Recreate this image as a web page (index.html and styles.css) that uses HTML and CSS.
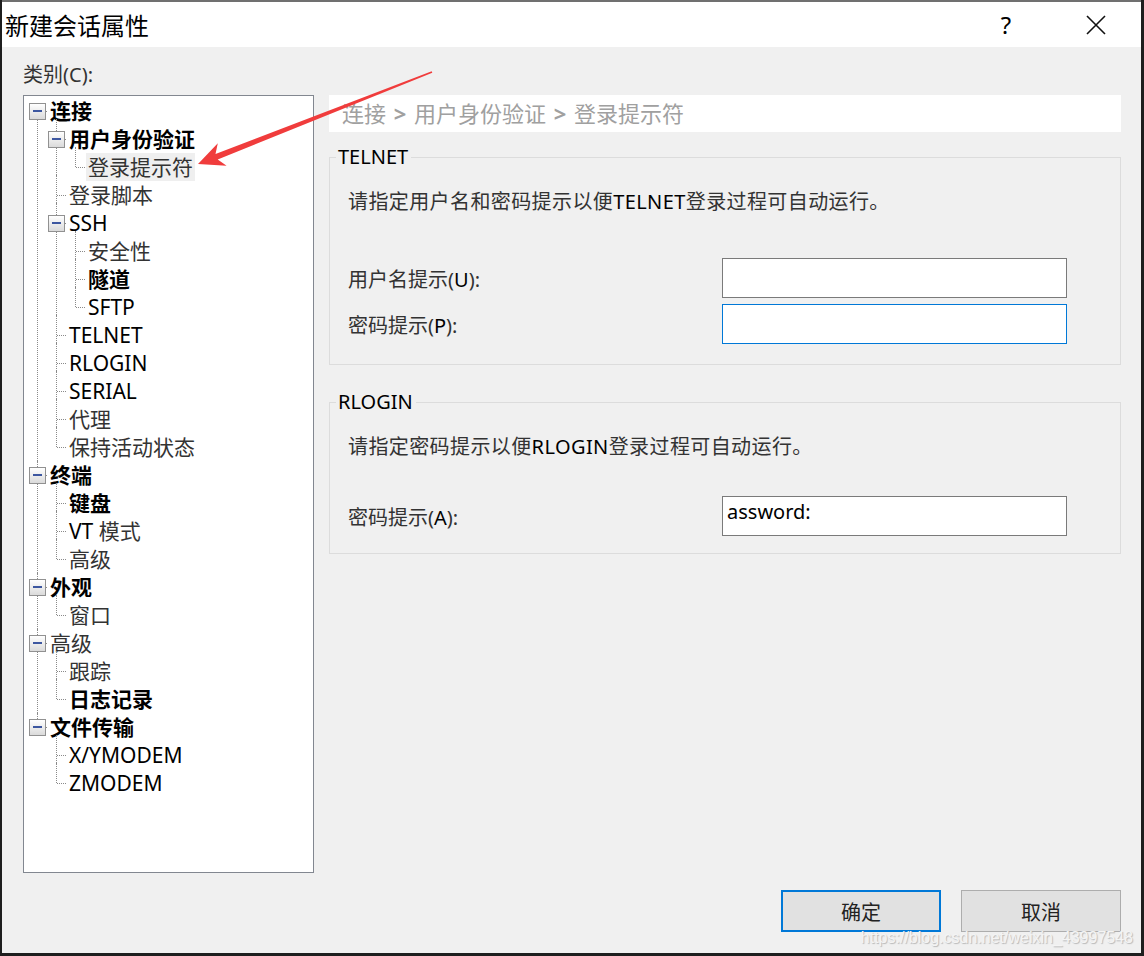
FILE: index.html
```html
<!DOCTYPE html>
<html>
<head>
<meta charset="utf-8">
<link rel="stylesheet" href="styles.css">
</head>
<body>
 <div class="window">
   <div class="titlebar">
     <div class="title">新建会话属性</div>
     <div class="tb-btns">
       <span class="tb-btn help">?</span>
       <span class="tb-btn close">
         <svg width="20" height="20" viewBox="0 0 20 20"><path d="M1 1 L19 19 M19 1 L1 19" stroke="#111" stroke-width="1.6" fill="none"/></svg>
       </span>
     </div>
   </div>

   <div class="content">
     <div class="main">
       <div class="left">
         <div class="cat-label">类别(C):</div>
         <div class="tree-box">
           <ul class="tree">
             <li><i class="tg"></i><span class="lb b">连接</span>
               <ul>
                 <li><i class="tg"></i><span class="lb b">用户身份验证</span>
                   <ul>
                     <li><span class="lb sel">登录提示符</span></li>
                   </ul>
                 </li>
                 <li><span class="lb">登录脚本</span></li>
                 <li><i class="tg"></i><span class="lb en">SSH</span>
                   <ul>
                     <li><span class="lb">安全性</span></li>
                     <li><span class="lb b">隧道</span></li>
                     <li><span class="lb en">SFTP</span></li>
                   </ul>
                 </li>
                 <li><span class="lb en">TELNET</span></li>
                 <li><span class="lb en">RLOGIN</span></li>
                 <li><span class="lb en">SERIAL</span></li>
                 <li><span class="lb">代理</span></li>
                 <li><span class="lb">保持活动状态</span></li>
               </ul>
             </li>
             <li><i class="tg"></i><span class="lb b">终端</span>
               <ul>
                 <li><span class="lb b">键盘</span></li>
                 <li><span class="lb"><span class="en">VT</span> 模式</span></li>
                 <li><span class="lb">高级</span></li>
               </ul>
             </li>
             <li><i class="tg"></i><span class="lb b">外观</span>
               <ul>
                 <li><span class="lb">窗口</span></li>
               </ul>
             </li>
             <li><i class="tg"></i><span class="lb">高级</span>
               <ul>
                 <li><span class="lb">跟踪</span></li>
                 <li><span class="lb b">日志记录</span></li>
               </ul>
             </li>
             <li><i class="tg"></i><span class="lb b">文件传输</span>
               <ul>
                 <li><span class="lb en">X/YMODEM</span></li>
                 <li><span class="lb en">ZMODEM</span></li>
               </ul>
             </li>
           </ul>
         </div>
       </div>

       <div class="right">
         <div class="crumb">连接 <b>&gt;</b> 用户身份验证 <b>&gt;</b> 登录提示符</div>

         <fieldset class="group telnet">
           <legend>TELNET</legend>
           <div class="desc">请指定用户名和密码提示以便<span class="en">TELNET</span>登录过程可自动运行。</div>
           <div class="row">
             <label>用户名提示(<span class="en">U</span>):</label>
             <div class="input"></div>
           </div>
           <div class="row">
             <label>密码提示(<span class="en">P</span>):</label>
             <div class="input focus"></div>
           </div>
         </fieldset>

         <fieldset class="group rlogin">
           <legend>RLOGIN</legend>
           <div class="desc">请指定密码提示以便<span class="en">RLOGIN</span>登录过程可自动运行。</div>
           <div class="row">
             <label>密码提示(<span class="en">A</span>):</label>
             <div class="input">assword:</div>
           </div>
         </fieldset>
       </div>
     </div>

     <div class="footer">
       <button class="btn primary">确定</button>
       <button class="btn">取消</button>
     </div>
   </div>

   <div class="watermark">https://blog.csdn.net/weixin_43997548</div>

   <svg class="arrow" width="1139" height="300" viewBox="0 0 1139 300">
     <polygon fill="#f03c3c" points="196,162 215.8,141.3 213.5,151.9 429.7,69.3 430.3,70.7 215.7,157.5 224.6,163.7"/>
   </svg>
 </div>
</body>
</html>
```

FILE: styles.css
```css
/* Frame */
body {
 margin: 0;
 padding: 0 3px 3px 2px;
 background: #1e1e1e;
 font-family: "Noto Sans", "Noto Sans CJK SC", sans-serif;
 color: #222;
}

.window {
 position: relative;
 width: 1139px;
 height: 951px;
 border-top: 2px solid #707070;
 background: #f0f0f0;
 overflow: hidden;
}

/* Title bar */
.titlebar {
 height: 45px;
 background: #fff;
 display: flex;
 align-items: center;
 justify-content: space-between;
}

.title {
 padding-left: 3px;
 font-size: 24px;
 color: #000;
}

.tb-btns {
 display: flex;
 gap: 44px;
 padding-right: 22px;
}

.tb-btn {
 width: 46px;
 height: 45px;
 display: flex;
 align-items: center;
 justify-content: center;
 color: #000;
}

.help {
 font-size: 24px;
 font-family: "Noto Sans", sans-serif;
}

/* Content */
.content {
 height: 906px;
 box-sizing: border-box;
 padding: 16px 20px 0 21px;
}

.main {
 display: flex;
 gap: 15px;
}

.left {
 width: 291px;
}

.cat-label {
 height: 24px;
 line-height: 24px;
 font-size: 20px;
 color: #333;
 margin-bottom: 8px;
}

.tree-box {
 height: 778px;
 box-sizing: border-box;
 border: 1px solid #828790;
 background: #fff;
 overflow: hidden;
}

/* Tree */
.tree {
 list-style: none;
 margin: 0;
 padding: 1px 0 0 11px;
}

.tree ul {
 list-style: none;
 margin: 0;
 padding-left: 6px;
}

.tree li {
 position: relative;
 padding-left: 13px;
}

.tree li::before {
 content: "";
 position: absolute;
 left: 2px;
 top: -6px;
 bottom: 0;
 border-left: 1px dotted #8a8a8a;
}

.tree li:last-child::before {
 bottom: auto;
 height: 20px;
}

.tree > li::before { top: 0; }
.tree > li:last-child::before { height: 14px; }
.tree > li:first-child::before { top: 14px; }

.tree li::after {
 content: "";
 position: absolute;
 left: 3px;
 top: 14px;
 width: 9px;
 border-top: 1px dotted #8a8a8a;
}

.tg {
 position: absolute;
 left: -6px;
 top: 6px;
 width: 17px;
 height: 17px;
 box-sizing: border-box;
 border: 1px solid #919191;
 background: linear-gradient(#ffffff, #dadada);
 z-index: 1;
}

.tg::before {
 content: "";
 position: absolute;
 left: 3px;
 top: 6px;
 width: 9px;
 height: 2px;
 background: #3d57a0;
}

.lb {
 display: inline-block;
 height: 28px;
 line-height: 28px;
 padding: 0 2px;
 font-size: 21px;
 color: #333;
 vertical-align: top;
 white-space: nowrap;
}

.lb.b { font-weight: bold; color: #000; }
.lb.en, .lb .en { color: #000; }
.lb.sel { background: #efefef; }

/* Right side */
.right {
 flex: 1;
 padding-top: 32px;
}

.crumb {
 height: 37px;
 line-height: 37px;
 background: #fff;
 padding-left: 13px;
 font-size: 22px;
 color: #a0a0a0;
}

.crumb b {
 padding: 0 2px;
}

.group {
 margin: 14px 0 0;
 padding: 20px 0 20px 6px;
 border: 1px solid #dcdcdc;
 min-width: 0;
}

.group legend {
 padding: 0 3px 0 2px;
 font-size: 20px;
 line-height: 22px;
 color: #000;
}

.rlogin {
 margin-top: 26px;
 padding-bottom: 17px;
}

.desc {
 height: 28px;
 line-height: 28px;
 margin-left: 12px;
 font-size: 20px;
 letter-spacing: 0.4px;
 color: #333;
 margin-bottom: 42px;
}

.rlogin .desc { margin-bottom: 35px; }

.en { color: #000; }

.row {
 display: flex;
 align-items: center;
 margin-left: 12px;
}

.row + .row {
 margin-top: 6px;
}

.row label {
 width: 374px;
 font-size: 20px;
 color: #333;
}

.input {
 width: 345px;
 height: 40px;
 box-sizing: border-box;
 border: 1px solid #7a7a7a;
 background: #fff;
 padding: 0 4px;
 font-size: 20px;
 line-height: 30px;
 color: #000;
}

.input.focus {
 border-color: #0078d7;
}

/* Buttons */
.footer {
 display: flex;
 justify-content: flex-end;
 gap: 20px;
 margin-top: 17px;
}

.btn {
 width: 160px;
 height: 42px;
 background: #e1e1e1;
 border: 1px solid #adadad;
 font-family: "Noto Sans CJK SC", sans-serif;
 font-size: 20px;
 color: #222;
 padding: 0;
}

.btn.primary {
 border: 2px solid #0078d7;
}

/* Overlays */
.watermark {
 position: absolute;
 right: 8px;
 bottom: 6px;
 font-family: "Liberation Sans", sans-serif;
 font-size: 16px;
 color: #f4f4f4;
 text-shadow: 1px 1px 1px #b8b8b8;
}

.arrow {
 position: absolute;
 left: 0;
 top: 0;
 pointer-events: none;
}
```
